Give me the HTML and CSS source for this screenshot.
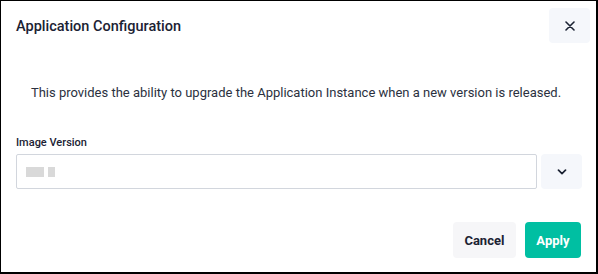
FILE: index.html
```html
<!DOCTYPE html>
<html>
    <head>
        <title>Application Configuration</title>
        <link rel="stylesheet" href="styles.css">
    </head>
    <body>
        <div class="dialog">
            <div class="dialog-header">
                <h2>Application Configuration</h2>
                <button class="icon-btn close-btn" aria-label="Close">
                    <svg width="10" height="10" viewBox="0 0 10 10"><path d="M1 1 L9 9 M9 1 L1 9" stroke="#1b2233" stroke-width="1.6" stroke-linecap="round"/></svg>
                </button>
            </div>
            <p class="intro">This provides the ability to upgrade the Application Instance when a new version is released.</p>
            <div class="field">
                <label for="image-version">Image Version</label>
                <div class="field-row">
                    <div class="select-box" id="image-version">
                        <span class="masked"><i class="m1"></i><i class="m2"></i></span>
                    </div>
                    <button class="icon-btn toggle-btn" aria-label="Open">
                        <svg width="10" height="6" viewBox="0 0 10 6"><path d="M1.5 1.2 L5 4.6 L8.5 1.2" fill="none" stroke="#1b2233" stroke-width="1.7" stroke-linecap="round" stroke-linejoin="round"/></svg>
                    </button>
                </div>
            </div>
            <div class="dialog-footer">
                <button class="btn btn-cancel">Cancel</button>
                <button class="btn btn-apply">Apply</button>
            </div>
        </div>
    </body>
</html>
```

FILE: styles.css
```css
body {
    margin: 0;
    background: #fff;
    font-family: Roboto, "Liberation Sans", sans-serif;
}
.dialog {
    width: 598px;
    height: 274px;
    box-sizing: border-box;
    border: solid #000;
    border-width: 1px 2px 2px 1px;
    padding: 7px 6px 0 15px;
    color: #1b2233;
}
.dialog-header {
    display: flex;
    justify-content: space-between;
    align-items: flex-start;
}
.dialog-header h2 {
    margin: 10px 0 0;
    font-size: 14.5px;
    font-weight: 500;
}
.icon-btn {
    display: flex;
    align-items: center;
    justify-content: center;
    border: none;
    border-radius: 4px;
    background: #f5f7fb;
    padding: 0;
    cursor: pointer;
}
.close-btn {
    width: 41px;
    height: 35px;
}
.intro {
    margin: 42px 14px 0 0;
    text-align: center;
    font-size: 13px;
    color: #2b3140;
}
.field {
    margin-top: 36px;
    padding-right: 8px;
}
.field label {
    display: block;
    font-size: 11px;
    font-weight: 500;
    margin-bottom: 5px;
}
.field-row {
    display: flex;
    gap: 4px;
}
.select-box {
    flex: 1;
    height: 35px;
    box-sizing: border-box;
    border: 1px solid #d2d6dd;
    border-radius: 2px;
    display: flex;
    align-items: center;
    padding-left: 9px;
}
.masked {
    display: flex;
    gap: 4px;
}
.masked i {
    display: block;
    height: 10px;
    background: #d9d9d9;
    filter: blur(0.6px);
}
.masked .m1 { width: 18px; }
.masked .m2 { width: 7px; }
.toggle-btn {
    width: 41px;
    height: 35px;
}
.dialog-footer {
    display: flex;
    justify-content: flex-end;
    gap: 9px;
    margin-top: 33px;
    padding-right: 9px;
}
.btn {
    height: 36px;
    border: none;
    border-radius: 4px;
    font-family: Roboto, "Liberation Sans", sans-serif;
    font-size: 13px;
    font-weight: 700;
    padding: 0 11.5px;
    cursor: pointer;
}
.btn-cancel {
    background: #f6f6f8;
    color: #1b2233;
}
.btn-apply {
    background: #00bfa2;
    color: #fff;
}
```
